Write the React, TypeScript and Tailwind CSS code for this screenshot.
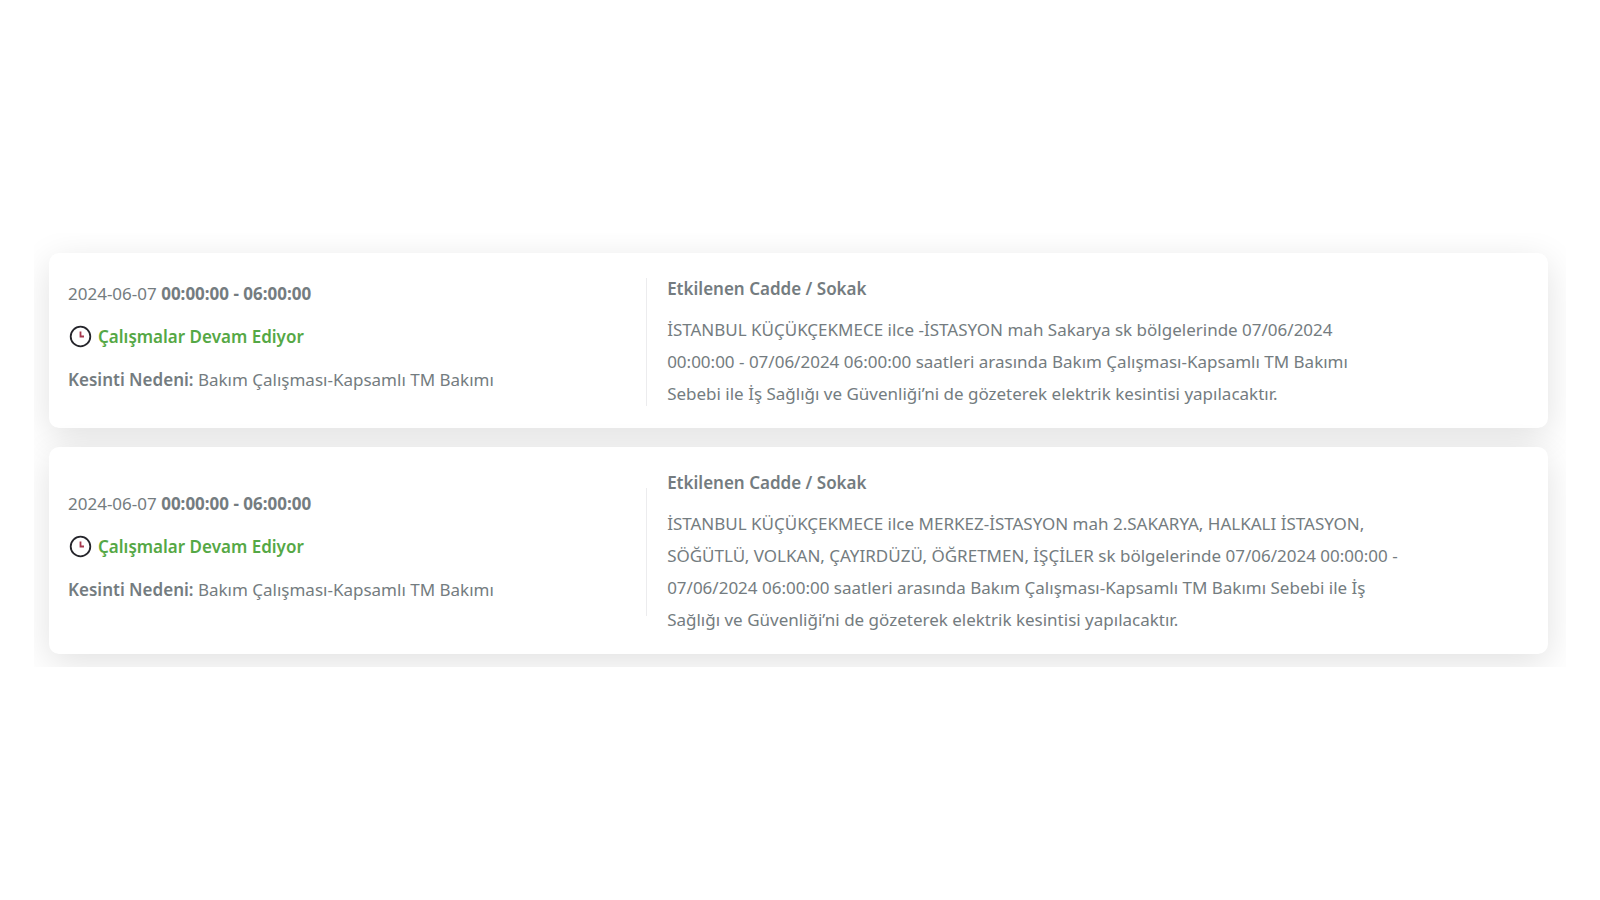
type Outage = {
  id: number;
  date: string;
  hours: string;
  status: string;
  reason: string;
  streets: string;
};

const outages: Outage[] = [
  {
    id: 1,
    date: "2024-06-07",
    hours: "00:00:00 - 06:00:00",
    status: "Çalışmalar Devam Ediyor",
    reason: "Bakım Çalışması-Kapsamlı TM Bakımı",
    streets:
      "İSTANBUL KÜÇÜKÇEKMECE ilce -İSTASYON mah Sakarya sk bölgelerinde 07/06/2024\n00:00:00 - 07/06/2024 06:00:00 saatleri arasında Bakım Çalışması-Kapsamlı TM Bakımı\nSebebi ile İş Sağlığı ve Güvenliği’ni de gözeterek elektrik kesintisi yapılacaktır.",
  },
  {
    id: 2,
    date: "2024-06-07",
    hours: "00:00:00 - 06:00:00",
    status: "Çalışmalar Devam Ediyor",
    reason: "Bakım Çalışması-Kapsamlı TM Bakımı",
    streets:
      "İSTANBUL KÜÇÜKÇEKMECE ilce MERKEZ-İSTASYON mah 2.SAKARYA, HALKALI İSTASYON,\nSÖĞÜTLÜ, VOLKAN, ÇAYIRDÜZÜ, ÖĞRETMEN, İŞÇİLER sk bölgelerinde 07/06/2024 00:00:00 -\n07/06/2024 06:00:00 saatleri arasında Bakım Çalışması-Kapsamlı TM Bakımı Sebebi ile İş\nSağlığı ve Güvenliği’ni de gözeterek elektrik kesintisi yapılacaktır.",
  },
];

function ClockIcon() {
  return (
    <svg width="24" height="24" viewBox="0 0 24 24" fill="none" aria-hidden="true">
      <circle cx="12.5" cy="11.5" r="9.8" stroke="#25252b" strokeWidth="1.8" />
      <path d="M12.5 6.5V11.5H16" stroke="#a5384f" strokeWidth="1.8" />
    </svg>
  );
}

function OutageCard({ outage }: { outage: Outage }) {
  return (
    <article className="grid grid-cols-[9fr_14fr] items-center rounded-[10px] bg-white pt-5 pb-[18px] pl-[19px] shadow-[0_9px_36px_rgba(0,0,0,0.12)]">
      <div className="flex flex-col gap-[11px] border-r border-[#ececee] pb-[10px] leading-8">
        <p>
          {outage.date} <strong className="font-bold">{outage.hours}</strong>
        </p>
        <p className="flex items-center gap-[6px] font-semibold text-[#55a845]">
          <ClockIcon />
          {outage.status}
        </p>
        <p>
          <strong className="font-semibold">Kesinti Nedeni:</strong> {outage.reason}
        </p>
      </div>
      <div className="pl-5 leading-8">
        <h2 className="mb-[9px] font-semibold">Etkilenen Cadde / Sokak</h2>
        <p className="whitespace-pre-line">{outage.streets}</p>
      </div>
    </article>
  );
}

export default function App() {
  return (
    <main className="flex min-h-screen flex-col justify-center bg-white px-[34px] font-['Noto_Sans',sans-serif] text-[17px] text-[#747c80]">
      <section className="flex flex-col gap-[19px] overflow-hidden pt-5 pr-[18px] pb-[13px] pl-[15px]">
        {outages.map((outage) => (
          <OutageCard key={outage.id} outage={outage} />
        ))}
      </section>
    </main>
  );
}
